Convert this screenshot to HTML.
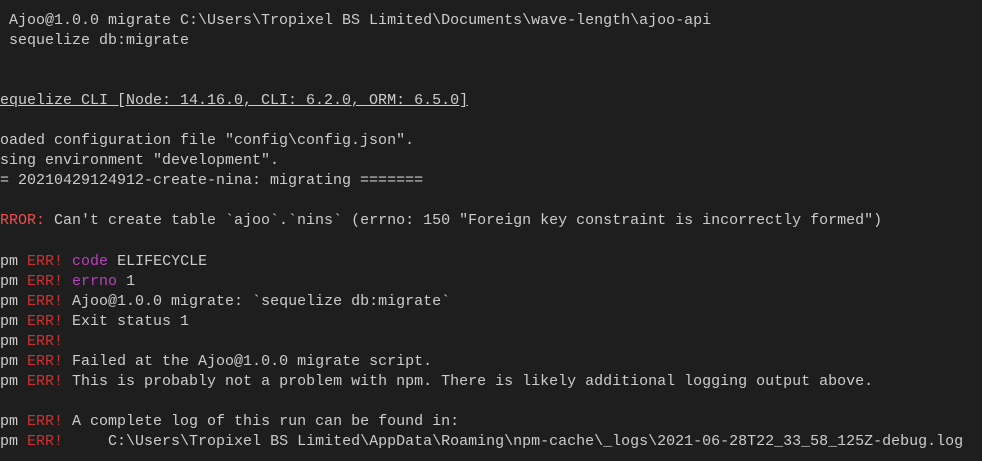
<!DOCTYPE html>
<html><head><meta charset="utf-8"><style>
html,body{margin:0;padding:0;background:#1e1e1e;width:982px;height:461px;overflow:hidden}
pre{margin:0;padding:11px 0 0 0;font-family:"Liberation Mono",monospace;font-size:15px;line-height:20.05px;color:#cccccc;white-space:pre}
.r{color:#f14c4c}.e{color:#cd3131}.m{color:#bc3fbc}.u{text-decoration:underline}
</style></head><body><pre> Ajoo@1.0.0 migrate C:\Users\Tropixel BS Limited\Documents\wave-length\ajoo-api
 sequelize db:migrate


<span class="u">equelize CLI [Node: 14.16.0, CLI: 6.2.0, ORM: 6.5.0]</span>

oaded configuration file "config\config.json".
sing environment "development".
= 20210429124912-create-nina: migrating =======

<span class="r">RROR:</span> Can't create table `ajoo`.`nins` (errno: 150 "Foreign key constraint is incorrectly formed")

pm <span class="e">ERR!</span> <span class="m">code</span> ELIFECYCLE
pm <span class="e">ERR!</span> <span class="m">errno</span> 1
pm <span class="e">ERR!</span> Ajoo@1.0.0 migrate: `sequelize db:migrate`
pm <span class="e">ERR!</span> Exit status 1
pm <span class="e">ERR!</span>
pm <span class="e">ERR!</span> Failed at the Ajoo@1.0.0 migrate script.
pm <span class="e">ERR!</span> This is probably not a problem with npm. There is likely additional logging output above.

pm <span class="e">ERR!</span> A complete log of this run can be found in:
pm <span class="e">ERR!</span>     C:\Users\Tropixel BS Limited\AppData\Roaming\npm-cache\_logs\2021-06-28T22_33_58_125Z-debug.log
</pre></body></html>
